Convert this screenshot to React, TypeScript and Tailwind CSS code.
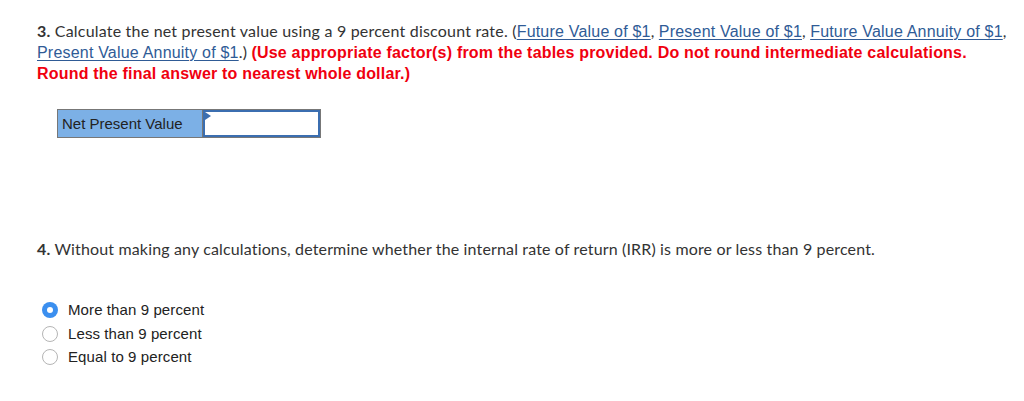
import { useState } from 'react';

const options = ['More than 9 percent', 'Less than 9 percent', 'Equal to 9 percent'];

function Link({ children }: { children: React.ReactNode }) {
  return (
    <a href="#" className="whitespace-nowrap text-[#2f5b96] underline decoration-1 underline-offset-2 tracking-[0.2px] font-['Liberation_Sans',Arial,sans-serif]">
      {children}
    </a>
  );
}

export default function App() {
  const [choice, setChoice] = useState(0);

  return (
    <div className="w-[1024px] h-[401px] bg-white pl-[37px] pr-[12px] pt-[21px] text-[16px] leading-[20px] text-[#333] font-['Lato','Open_Sans',sans-serif]">
      <p className="tracking-[0.2px]">
        <b>3.</b> Calculate the net present value using a 9 percent discount rate. (
        <Link>Future Value of $1</Link>, <Link>Present Value of $1</Link>, <Link>Future Value Annuity of $1</Link>,{' '}
        <Link>Present Value Annuity of $1</Link>.){' '}
        <span className="font-bold text-[#f0000f] tracking-[0.2px] font-['Liberation_Sans',Arial,sans-serif]">
          (Use appropriate factor(s) from the tables provided. Do not round intermediate calculations. Round the final
          answer to nearest whole dollar.)
        </span>
      </p>

      <table className="mt-[25px] ml-[20px] border border-[#777] border-collapse font-['Liberation_Sans',Arial,sans-serif] text-[15px]">
        <tbody>
          <tr>
            <td className="w-[145px] h-[27px] bg-[#7cb0e6] text-[#222] px-[4px] border-r border-[#777]">Net Present Value</td>
            <td className="p-0">
              <div className="relative w-[117px] h-[27px] border-2 border-[#3b6eb0] bg-white">
                <span className="absolute left-0 top-0 w-0 h-0 border-y-[4px] border-y-transparent border-l-[6px] border-l-[#3b6eb0]" />
              </div>
            </td>
          </tr>
        </tbody>
      </table>

      <p className="mt-[101px] tracking-[0.15px]">
        <b>4.</b> Without making any calculations, determine whether the internal rate of return (IRR) is more or less than
        9 percent.
      </p>

      <div className="mt-[41px] ml-[5px] flex flex-col gap-[3.5px] font-['Liberation_Sans',Arial,sans-serif] text-[15px] text-[#222]">
        {options.map((o, i) => (
          <label key={o} className="flex items-center gap-[10px] h-[20px] cursor-pointer tracking-[0.1px]" onClick={() => setChoice(i)}>
            {choice === i ? (
              <span className="w-[16px] h-[16px] rounded-full bg-[#3b8fef] flex items-center justify-center">
                <span className="w-[6px] h-[6px] rounded-full bg-white" />
              </span>
            ) : (
              <span className="w-[16px] h-[16px] rounded-full border border-[#b5b5b5] bg-white" />
            )}
            {o}
          </label>
        ))}
      </div>
    </div>
  );
}
